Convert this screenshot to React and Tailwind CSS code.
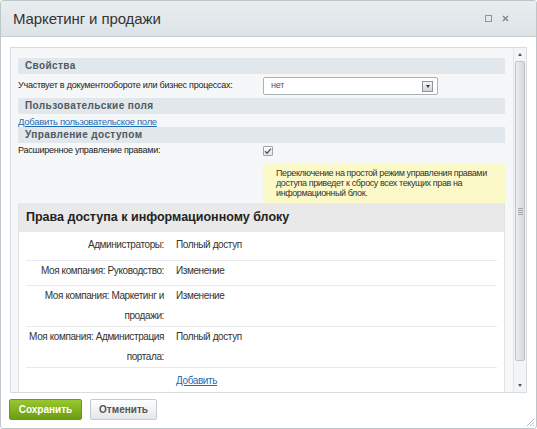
import React from "react";

const font = { fontFamily: '"Liberation Sans", Arial, sans-serif' };

const SectionHeader = ({ children }) => (
  <div className="h-[16px] bg-[#e1e7ea] pl-[7px] text-[10px] font-bold leading-[16px] tracking-[0.4px] text-[#4c5a63]">
    {children}
  </div>
);

const rights = [
  { label: "Администраторы:", value: "Полный доступ", h: "h-[26px]" },
  { label: "Моя компания: Руководство:", value: "Изменение", h: "h-[25px]" },
  { label: "Моя компания: Маркетинг и продажи:", value: "Изменение", h: "h-[41px]" },
  { label: "Моя компания: Администрация портала:", value: "Полный доступ", h: "h-[41px]" },
];

const Scrollbar = () => (
  <div className="flex w-[13px] flex-col border-l border-[#e3e6e8] bg-[#f3f4f5]">
    <div className="flex h-[13px] items-center justify-center">
      <div className="h-0 w-0 border-x-[2.5px] border-b-[3px] border-x-transparent border-b-[#555]" />
    </div>
    <div className="mx-[1px] flex h-[300px] items-center justify-center rounded-[2px] border border-[#c2c5c8] bg-gradient-to-r from-[#eceded] to-[#d6d8da]">
      <div className="flex flex-col gap-[1px]">
        <div className="h-px w-[5px] bg-[#a3a6a9]" />
        <div className="h-px w-[5px] bg-[#a3a6a9]" />
        <div className="h-px w-[5px] bg-[#a3a6a9]" />
        <div className="h-px w-[5px] bg-[#a3a6a9]" />
      </div>
    </div>
    <div className="flex-1" />
    <div className="flex h-[13px] items-center justify-center">
      <div className="h-0 w-0 border-x-[2.5px] border-t-[3px] border-x-transparent border-t-[#555]" />
    </div>
  </div>
);

export default function App() {
  return (
    <div
      className="relative h-[429px] w-[537px] overflow-hidden rounded-[3px] border border-[#bfc6ca] bg-white"
      style={font}
    >
      {/* title bar */}
      <div className="flex h-[36px] items-center border-b border-[#c6ced2] bg-gradient-to-b from-[#e8edef] to-[#dde4e7] pl-[12px] pr-[27px]">
        <div className="flex-1 pt-[2px] text-[15px] tracking-[-0.1px] text-[#333]">Маркетинг и продажи</div>
        <div className="mr-[10px] h-[7px] w-[7px] border border-[#8c969b]" />
        <svg width="7" height="7" viewBox="0 0 7 7" className="text-[#7d878c]">
          <path d="M1 1L6 6M6 1L1 6" stroke="currentColor" strokeWidth="1.4" />
        </svg>
      </div>

      {/* body */}
      <div className="px-[9px] pt-[10px]">
        <div className="flex h-[346px] border border-[#d6dcdf]">
          <div className="flex-1 overflow-hidden bg-[#f5f7f8] pl-[7px] pr-[8px] pt-[10px] text-[9px] tracking-[-0.25px] text-[#222]">
            <SectionHeader>Свойства</SectionHeader>
            <div className="flex h-[24px] items-center">
              <div className="w-[245px]">Участвует в документообороте или бизнес процессах:</div>
              <div className="flex h-[18px] w-[175px] items-center rounded-[2px] border border-[#a8b2b7] bg-white pl-[7px] pr-[4px] text-[#555]">
                <span className="flex-1">нет</span>
                <div className="flex h-[11px] w-[11px] items-center justify-center border border-[#8d959a] bg-gradient-to-b from-[#f4f4f4] to-[#d3d5d6]">
                  <div className="h-0 w-0 border-x-[2.5px] border-t-[3px] border-x-transparent border-t-[#333]" />
                </div>
              </div>
            </div>
            <SectionHeader>Пользовательские поля</SectionHeader>
            <div className="h-[13px] pt-[2px] text-[9.5px] leading-[11px] tracking-[-0.3px]">
              <a className="text-[#1f6bb5] underline" href="#">
                Добавить пользовательское поле
              </a>
            </div>
            <SectionHeader>Управление доступом</SectionHeader>
            <div className="flex h-[16px] items-center">
              <div className="w-[245px]">Расширенное управление правами:</div>
              <div className="flex h-[10px] w-[10px] items-center justify-center rounded-[1px] border border-[#9ea6ab] bg-gradient-to-b from-white to-[#e4e6e7]">
                <svg width="8" height="8" viewBox="0 0 8 8">
                  <path d="M1 4.2L3.1 6.2L7 1.6" stroke="#555" strokeWidth="1.3" fill="none" />
                </svg>
              </div>
            </div>
            <div className="flex">
              <div className="w-[245px]" />
              <div className="mt-[4px] h-[40px] flex-1 bg-[#fbf9c7] pl-[13px] pr-[8px] pt-[5px] leading-[10px] tracking-[-0.4px] text-[#333]">
                Переключение на простой режим управления правами доступа приведет к сбросу всех текущих прав на
                информационный блок.
              </div>
            </div>

            {/* rights panel */}
            <div className="border-x border-[#e2e2e2] bg-white">
              <div className="flex h-[29px] items-center bg-[#e9e9e9] pl-[7px] text-[12.5px] font-bold tracking-normal text-[#222]">
                Права доступа к информационному блоку
              </div>
              <div className="px-[7px] pt-[3px] text-[10px] tracking-[-0.4px]">
                {rights.map((r) => (
                  <div key={r.label} className={`flex border-b border-[#e8eaeb] ${r.h}`}>
                    <div className="w-[148px] pr-[10px] text-right leading-[20px] text-[#333]">{r.label}</div>
                    <div className="pl-[2px] leading-[20px] text-[#333]">{r.value}</div>
                  </div>
                ))}
                <div className="flex h-[25px] items-center">
                  <div className="w-[148px]" />
                  <a className="pl-[2px] text-[#1f6bb5] underline" href="#">
                    Добавить
                  </a>
                </div>
              </div>
            </div>
          </div>
          <Scrollbar />
        </div>
      </div>

      {/* footer */}
      <div className="flex gap-[8px] px-[8px] pt-[6px]">
        <button className="h-[21px] w-[73px] rounded-[2px] border border-[#6b9a13] bg-gradient-to-b from-[#98c72f] to-[#6b9d10] text-[10px] font-bold text-white">
          Сохранить
        </button>
        <button className="h-[21px] w-[67px] rounded-[2px] border border-[#c7cacc] bg-gradient-to-b from-white to-[#e4e6e7] text-[10px] font-bold text-[#555]">
          Отменить
        </button>
      </div>

      {/* resize grip */}
      <svg width="10" height="10" viewBox="0 0 10 10" className="absolute bottom-[1px] right-[1px]">
        <path d="M9 2L2 9M9 5L5 9M9 8L8 9" stroke="#b5bbbe" strokeWidth="1" />
      </svg>
    </div>
  );
}
